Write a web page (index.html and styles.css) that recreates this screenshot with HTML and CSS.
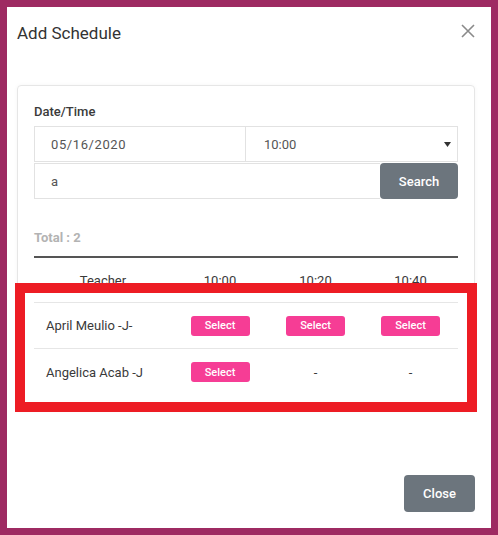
FILE: index.html
```html
<!DOCTYPE html>
<html>
<head>
<meta charset="utf-8">
<link rel="stylesheet" href="styles.css">
</head>
<body>
<div class="modal">
  <div class="modal-header">
    <h1 class="title">Add Schedule</h1>
    <button class="x-btn" aria-label="close">
      <svg width="14" height="14" viewBox="0 0 14 14"><path d="M1 1L13 13M13 1L1 13" stroke="#8a8a8a" stroke-width="1.6" fill="none"/></svg>
    </button>
  </div>
  <div class="modal-body">
    <div class="card">
      <div class="label">Date/Time</div>
      <div class="row-date">
        <div class="field date">05/16/2020</div>
        <div class="field time">10:00<svg class="caret" width="7" height="5" viewBox="0 0 7 5"><path d="M0 0H7L3.5 5Z" fill="#333"/></svg></div>
      </div>
      <div class="row-search">
        <div class="field search-input">a</div>
        <button class="btn-gray search-btn">Search</button>
      </div>
      <div class="total">Total : 2</div>
      <div class="table">
        <div class="tr th">
          <div class="cell center">Teacher</div>
          <div class="cell center">10:00</div>
          <div class="cell center">10:20</div>
          <div class="cell center">10:40</div>
        </div>
        <div class="tr">
          <div class="cell name">April Meulio -J-</div>
          <div class="cell center"><button class="btn-pink">Select</button></div>
          <div class="cell center"><button class="btn-pink">Select</button></div>
          <div class="cell center"><button class="btn-pink">Select</button></div>
        </div>
        <div class="tr last">
          <div class="cell name">Angelica Acab -J</div>
          <div class="cell center"><button class="btn-pink">Select</button></div>
          <div class="cell center">-</div>
          <div class="cell center">-</div>
        </div>
      </div>
    </div>
  </div>
  <div class="modal-footer">
    <button class="btn-gray close-btn">Close</button>
  </div>
  <div class="highlight"></div>
</div>
</body>
</html>
```
FILE: styles.css
```css
* { box-sizing: border-box; }
html, body { margin: 0; padding: 0; }
body {
  background: #9e2a62;
  padding: 7px;
  font-family: Roboto, "Liberation Sans", sans-serif;
  color: #333;
}
.modal {
  position: relative;
  background: #fff;
  width: 484px;
  height: 521px;
  display: flex;
  flex-direction: column;
}
.modal-header {
  display: flex;
  justify-content: space-between;
  align-items: flex-start;
  padding: 14px 16px 0 10px;
  height: 52px;
}
.title {
  margin: 0;
  font-size: 17px;
  font-weight: 400;
  line-height: 24px;
  color: #333;
}
.x-btn {
  border: 0;
  background: none;
  padding: 0;
  margin-top: 3px;
  width: 14px;
  height: 14px;
  display: block;
}
.x-btn svg { display: block; }
.modal-body {
  padding: 26px 16px 0 10px;
}
.card {
  border: 1px solid #e6e6e6;
  border-radius: 4px;
  box-shadow: 0 0 4px rgba(0,0,0,0.04);
  padding: 18px 16px 16px 16px;
  height: 326px;
}
.label {
  font-size: 13px;
  font-weight: 500;
  line-height: 16px;
  color: #3a3a3a;
  margin-bottom: 6px;
}
.row-date, .row-search {
  display: flex;
}
.field {
  height: 36px;
  border: 1px solid #e2e2e2;
  font-size: 13px;
  color: #555;
  display: flex;
  align-items: center;
}
.date {
  width: 212px;
  padding-left: 16px;
  letter-spacing: 0.6px;
}
.time {
  flex: 1;
  border-left: 0;
  padding-left: 18px;
  padding-right: 6px;
  justify-content: space-between;
}
.caret { display: block; }
.row-search { margin-top: 1px; }
.search-input {
  flex: 1;
  padding-left: 16px;
  border-right: 0;
}
.btn-gray {
  background: #6c757d;
  color: #fff;
  border: 0;
  font-family: Roboto, "Liberation Sans", sans-serif;
  font-size: 13px;
  font-weight: 500;
  border-radius: 4px;
}
.search-btn {
  width: 78px;
  height: 36px;
}
.total {
  margin-top: 30px;
  font-size: 13px;
  font-weight: 700;
  color: #b3b3b3;
  line-height: 18px;
  padding-bottom: 9px;
  border-bottom: 2px solid #555;
}
.tr {
  display: grid;
  grid-template-columns: 138px 96px 95px 95px;
  height: 46px;
  border-bottom: 1px solid #e6e6e6;
  font-size: 13px;
  color: #3a3a3a;
}
.tr.th { height: 45px; }
.tr.last { border-bottom: 0; }
.cell {
  display: flex;
  align-items: center;
}
.center { justify-content: center; }
.name { padding-left: 12px; }
.btn-pink {
  width: 59px;
  height: 20px;
  border: 0;
  border-radius: 3px;
  background: #f63d95;
  color: #fff;
  font-family: Roboto, "Liberation Sans", sans-serif;
  font-size: 11px;
  font-weight: 500;
  padding: 0;
}
.modal-footer {
  margin-top: auto;
  display: flex;
  justify-content: flex-end;
  padding: 0 16px 16px 0;
}
.close-btn {
  width: 71px;
  height: 37px;
}
.highlight {
  position: absolute;
  left: 8px;
  top: 276px;
  width: 462px;
  height: 129px;
  border: 10px solid #ed1c24;
  pointer-events: none;
}
```
